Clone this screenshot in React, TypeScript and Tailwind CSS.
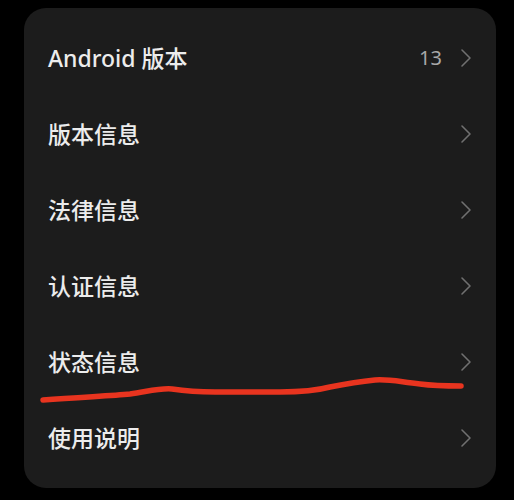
const rows = [
  { label: "Android 版本", value: "13" },
  { label: "版本信息" },
  { label: "法律信息" },
  { label: "认证信息" },
  { label: "状态信息" },
  { label: "使用说明" },
];

function Chevron() {
  return (
    <svg width="12" height="20" viewBox="0 0 12 20" className="text-[#707070]">
      <path d="M2 2 L10 10 L2 18" fill="none" stroke="currentColor" strokeWidth="1.6" strokeLinecap="round" strokeLinejoin="round" />
    </svg>
  );
}

export default function App() {
  return (
    <main
      className="relative h-[500px] w-[514px] bg-black pt-2"
      style={{ fontFamily: '"Noto Sans", "Noto Sans CJK SC", sans-serif' }}
    >
      <div className="ml-6 w-[472px] rounded-[22px] bg-[#1c1c1c] py-3">
        {rows.map((row) => (
          <div key={row.label} className="flex h-[76px] items-center pl-6 pr-6">
            <span className="flex-1 text-[23px] font-medium text-[#ececec]">{row.label}</span>
            {row.value && <span className="mr-[18px] text-[20px] text-[#a8a8a8]">{row.value}</span>}
            <Chevron />
          </div>
        ))}
      </div>
      <svg className="pointer-events-none absolute left-0 top-0" width="514" height="500">
        <path
          d="M43 400 C80 397 110 396 130 394 C150 391 160 388 172 389 C185 391 195 392 215 392 L280 392 C300 392 315 391 330 387 C345 384 355 382 375 380 C390 379 400 382 420 384 C435 386 445 386 461 386"
          fill="none"
          stroke="#e8341f"
          strokeWidth="5.5"
          strokeLinecap="round"
          strokeLinejoin="round"
        />
      </svg>
    </main>
  );
}
